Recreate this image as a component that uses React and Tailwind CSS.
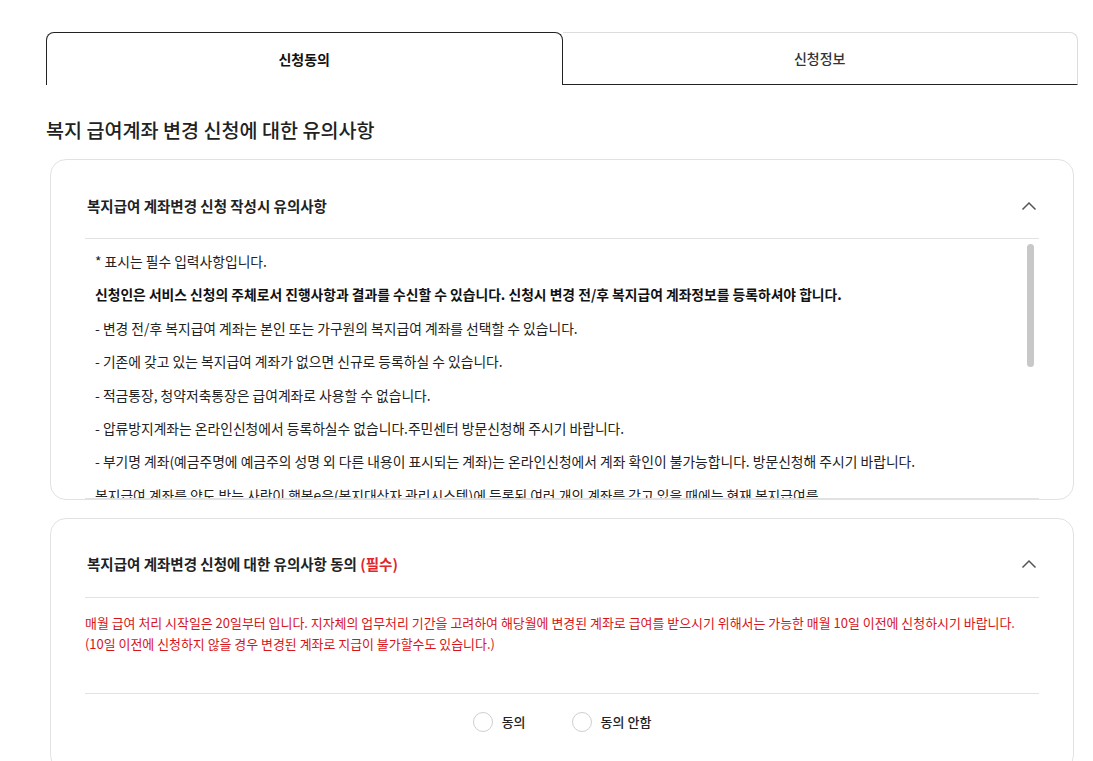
import React from 'react';

const notes = [
  { text: '* 표시는 필수 입력사항입니다.' },
  {
    text: '신청인은 서비스 신청의 주체로서 진행사항과 결과를 수신할 수 있습니다. 신청시 변경 전/후 복지급여 계좌정보를 등록하셔야 합니다.',
    bold: true,
  },
  { text: '- 변경 전/후 복지급여 계좌는 본인 또는 가구원의 복지급여 계좌를 선택할 수 있습니다.' },
  { text: '- 기존에 갖고 있는 복지급여 계좌가 없으면 신규로 등록하실 수 있습니다.' },
  { text: '- 적금통장, 청약저축통장은 급여계좌로 사용할 수 없습니다.' },
  { text: '- 압류방지계좌는 온라인신청에서 등록하실수 없습니다.주민센터 방문신청해 주시기 바랍니다.' },
  {
    text: '- 부기명 계좌(예금주명에 예금주의 성명 외 다른 내용이 표시되는 계좌)는 온라인신청에서 계좌 확인이 불가능합니다. 방문신청해 주시기 바랍니다.',
  },
  { text: '복지급여 계좌를 양도 받는 사람이 행복e음(복지대상자 관리시스템)에 등록된 여러 개의 계좌를 갖고 있을 때에는 현재 복지급여를' },
  { text: '수령하고 있는 계좌를 선택하여야 합니다.' },
];

const ChevronUp = () => (
  <svg width="16" height="10" viewBox="0 0 16 10" fill="none">
    <polyline points="1.5,8.5 8,2 14.5,8.5" stroke="#555" strokeWidth="1.5" fill="none" />
  </svg>
);

const Radio = ({ label }) => (
  <label className="flex items-center gap-[9px] cursor-pointer">
    <span className="w-[20px] h-[20px] rounded-full border border-[#cfcfcf] bg-white" />
    <span className="text-[13px] font-medium text-[#222]">{label}</span>
  </label>
);

export default function App() {
  return (
    <div
      className="bg-white min-h-screen text-[#222]"
      style={{ fontFamily: '"Noto Sans CJK KR", "Noto Sans", sans-serif' }}
    >
      <div className="ml-[46px] w-[1032px] pt-[32px]">
        {/* tabs */}
        <div className="flex h-[53px]">
          <div className="flex-1 flex items-center justify-center border border-b-0 border-[#222] rounded-t-[8px] text-[14px] font-bold text-[#111]">
            신청동의
          </div>
          <div className="flex-1 flex items-center justify-center border-t border-r border-[#dcdcdc] border-b-[#222] border-b rounded-tr-[8px] text-[14px] font-medium text-[#333]">
            신청정보
          </div>
        </div>

        <h2 className="mt-[31px] text-[19.6px] leading-[28px] font-medium text-[#222]">
          복지 급여계좌 변경 신청에 대한 유의사항
        </h2>

        {/* card 1 */}
        <div className="mt-[15px] mx-[4px] h-[341px] border border-[#e2e2e2] rounded-[16px] overflow-hidden">
          <div className="mx-[34px] h-[79px] pt-[13px] border-b border-[#e2e2e2] flex items-center justify-between pl-[2px] pr-[2px]">
            <span className="text-[14.5px] font-bold text-[#222]">복지급여 계좌변경 신청 작성시 유의사항</span>
            <ChevronUp />
          </div>
          <div className="relative mx-[34px] h-[260px] border-b border-[#e2e2e2] overflow-hidden">
            <div className="pt-[12px] pl-[10px] pr-[30px]">
              {notes.map((n, i) => (
                <p
                  key={i}
                  className={`text-[13.8px] leading-[20px] mb-[13.4px] whitespace-nowrap ${n.bold ? 'font-bold text-[#111]' : 'text-[#222]'}`}
                >
                  {n.text}
                </p>
              ))}
            </div>
            <div className="absolute right-[5px] top-[5px] w-[7px] h-[123px] rounded-full bg-[#c8c8c8]" />
          </div>
        </div>

        {/* card 2 */}
        <div className="mt-[18px] mx-[4px] border border-[#e2e2e2] rounded-[16px] pb-[20px]">
          <div className="mx-[34px] h-[79px] pt-[12px] border-b border-[#e2e2e2] flex items-center justify-between pl-[2px] pr-[2px]">
            <span className="text-[14.5px] font-bold text-[#222]">
              복지급여 계좌변경 신청에 대한 유의사항 동의 <span className="text-[#e0262b]">(필수)</span>
            </span>
            <ChevronUp />
          </div>
          <div className="mx-[34px] pt-[14px] pb-[39px] border-b border-[#e2e2e2]">
            <p className="text-[12.95px] leading-[21px] text-[#d7141a]">
              매월 급여 처리 시작일은 20일부터 입니다. 지자체의 업무처리 기간을 고려하여 해당월에 변경된 계좌로 급여를 받으시기 위해서는 가능한 매월 10일 이전에 신청하시기 바랍니다.
            </p>
            <p className="text-[12.95px] leading-[21px] text-[#d7141a]">
              (10일 이전에 신청하지 않을 경우 변경된 계좌로 지급이 불가할수도 있습니다.)
            </p>
          </div>
          <div className="h-[56px] flex items-center justify-center gap-[46px]">
            <Radio label="동의" />
            <Radio label="동의 안함" />
          </div>
        </div>
      </div>
    </div>
  );
}
